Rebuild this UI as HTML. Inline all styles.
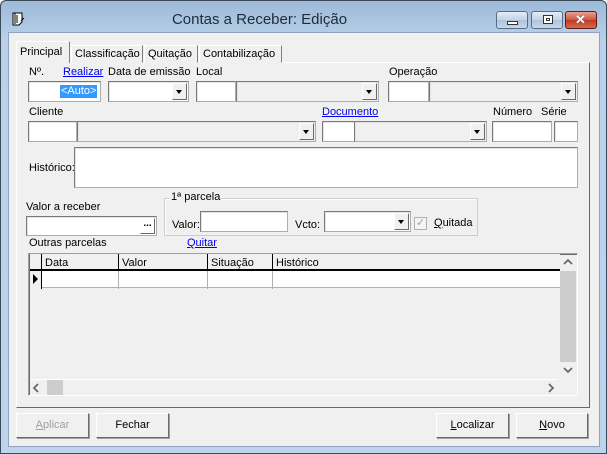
<!DOCTYPE html>
<html><head><meta charset="utf-8"><style>
*{box-sizing:border-box;margin:0;padding:0}
body{width:607px;height:454px;overflow:hidden;font-family:"Liberation Sans",sans-serif;font-size:11px;color:#000;background:#fff}
.a{position:absolute}
#win{position:absolute;left:0;top:0;width:607px;height:454px;background:linear-gradient(#9cb9d8,#b9d1ea 40px,#bcd4ec);box-shadow:inset 0 0 0 1px #3c4a5a;border-radius:6px 6px 0 0}
#client{position:absolute;left:8px;top:32px;width:592px;height:415px;background:#f0f0f0;border:1px solid #8ea4bd}
.t{position:absolute;white-space:nowrap;line-height:13px}
.ed{position:absolute;background:#fff;border:1px solid #abadb3;border-top-color:#7a7a7a;border-left-color:#7a7a7a;box-shadow:inset 1px 1px 0 #e3e3e3}
.g{background:#f0f0f0}
.dd{position:absolute;width:15px;top:1px;bottom:1px;right:1px;background:#f0f0f0;border:1px solid;border-color:#fff #696969 #696969 #fff}
.dd:after{content:"";position:absolute;left:3px;top:6px;border:3.5px solid transparent;border-top:4px solid #000}
.lnk{color:#0000ee;text-decoration:underline}
.btn{position:absolute;height:25px;background:#f0f0f0;border:1px solid;border-color:#fff #696969 #696969 #fff;box-shadow:1px 1px 0 #a0a0a0;text-align:center;line-height:23px;font-size:11px}
.tab{position:absolute;height:18px;border:1px solid;border-color:#fff #808080 transparent #fff;background:#f0f0f0;line-height:16px;padding-left:3px}
.wb{position:absolute;top:11px;height:18px;border:1px solid #5a6d84;border-radius:3px;background:linear-gradient(#e4ecf6,#c2d3e8 50%,#aec3dc 51%,#c7d8ec)}
.sa{position:absolute;width:0;height:0;border:4px solid transparent}
</style></head><body>
<div id="win">
<svg class="a" style="left:11px;top:11px" width="16" height="16" viewBox="0 0 16 16"><path d="M2 2h9v9l-3 3H2z" fill="#fff" stroke="#000"/><path d="M4 2v11M6 4v8M10 10l3-3" stroke="#000"/></svg>
<div class="t" style="left:153px;top:11px;width:213px;text-align:center;font-size:15px;line-height:18px;color:#1e2b3a">Contas a Receber: Edição</div>
<div class="wb" style="left:496px;width:32px"><div class="a" style="left:10px;top:9px;width:11px;height:4px;background:#fff;border:1px solid #333"></div></div>
<div class="wb" style="left:531px;width:32px"><div class="a" style="left:11px;top:3px;width:10px;height:9px;border:1px solid #333;background:#fff;box-shadow:inset 0 0 0 2px #fff,inset 0 0 0 3px #333"></div></div>
<div class="wb" style="left:565px;width:32px;border-color:#5c1c14;background:linear-gradient(#e8a193,#d0543c 50%,#c03a22 51%,#d56a50)"><div class="t" style="left:9px;top:1px;color:#fff;font-weight:bold;font-size:13px;text-shadow:0 0 1px #333">✕</div></div>
<div id="client">
 <div class="a" style="left:7px;top:29px;width:574px;height:346px;border:1px solid;border-color:#fff #696969 #696969 #fff"></div>
 <div class="tab" style="left:7px;top:8px;height:22px;width:54px;padding-top:2px;z-index:2;border-bottom:none">Principal</div>
 <div class="tab" style="left:62px;top:12px;width:72px">Classificação</div>
 <div class="tab" style="left:135px;top:12px;width:54px">Quitação</div>
 <div class="tab" style="left:190px;top:12px;width:83px">Contabilização</div>
</div>
<div class="t" style="left:29px;top:66px">Nº.</div>
<div class="t lnk" style="left:63px;top:66px">Realizar</div>
<div class="t" style="left:108px;top:66px">Data de emissão</div>
<div class="t" style="left:196px;top:66px">Local</div>
<div class="t" style="left:389px;top:66px">Operação</div>
<div class="ed" style="left:28px;top:81px;width:73px;height:21px"><span class="a" style="left:31px;top:3px;background:#3399ff;color:#fff;padding:0 1px;line-height:13px">&lt;Auto&gt;</span></div>
<div class="ed" style="left:108px;top:81px;width:81px;height:21px"><div class="dd"></div></div>
<div class="ed" style="left:196px;top:81px;width:40px;height:21px"></div>
<div class="ed g" style="left:236px;top:81px;width:143px;height:21px"><div class="dd"></div></div>
<div class="ed" style="left:388px;top:81px;width:41px;height:21px"></div>
<div class="ed g" style="left:429px;top:81px;width:149px;height:21px"><div class="dd"></div></div>
<div class="t" style="left:29px;top:106px">Cliente</div>
<div class="t lnk" style="left:322px;top:106px">Documento</div>
<div class="t" style="left:493px;top:106px">Número</div>
<div class="t" style="left:541px;top:106px">Série</div>
<div class="ed" style="left:28px;top:121px;width:49px;height:21px"></div>
<div class="ed g" style="left:77px;top:121px;width:239px;height:21px"><div class="dd"></div></div>
<div class="ed" style="left:322px;top:121px;width:33px;height:21px"></div>
<div class="ed g" style="left:354px;top:121px;width:133px;height:21px"><div class="dd"></div></div>
<div class="ed" style="left:492px;top:121px;width:60px;height:21px"></div>
<div class="ed" style="left:554px;top:121px;width:24px;height:21px"></div>
<div class="t" style="left:29px;top:162px">Histórico:</div>
<div class="ed" style="left:74px;top:147px;width:504px;height:41px"></div>
<div class="t" style="left:26px;top:201px">Valor a receber</div>
<div class="ed" style="left:26px;top:216px;width:131px;height:20px"><div class="a" style="right:1px;top:1px;width:15px;height:16px;border:1px solid;border-color:#fff #696969 #696969 #fff;font-size:10px;font-weight:bold;text-align:center;line-height:10px">...</div></div>
<div class="a" style="left:164px;top:198px;width:314px;height:38px;border:1px solid #c8ced4;box-shadow:inset 1px 1px 0 #fff"></div>
<div class="t" style="left:170px;top:191px;background:#f0f0f0;padding:0 1px">1ª parcela</div>
<div class="t" style="left:172px;top:219px">Valor:</div>
<div class="ed" style="left:200px;top:211px;width:88px;height:21px"></div>
<div class="t" style="left:295px;top:219px">Vcto:</div>
<div class="ed" style="left:324px;top:211px;width:87px;height:21px"><div class="dd"></div></div>
<div class="a" style="left:414px;top:217px;width:13px;height:13px;border:1px solid #b0b0b0;background:#f4f4f4;color:#a0a0a0;font-size:11px;line-height:11px;text-align:center">✓</div>
<div class="t" style="left:434px;top:217px"><u>Q</u>uitada</div>
<div class="t" style="left:29px;top:237px">Outras parcelas</div>
<div class="t lnk" style="left:187px;top:237px">Quitar</div>
<div class="a" style="left:28px;top:253px;width:550px;height:143px;border:1px solid;border-color:#a0a0a0 #fff #fff #a0a0a0;background:#f0f0f0;box-shadow:inset 1px 1px 0 #696969"></div>
<div class="a" style="left:30px;top:254px;width:530px;height:17px;background:#f0f0f0;border-bottom:2px solid #000"></div>
<div class="a" style="left:42px;top:271px;width:518px;height:17px;background:#fff;border-bottom:1px solid #b0b0b0"></div>
<div class="a" style="left:41px;top:254px;width:1px;height:35px;background:#000"></div>
<div class="a" style="left:118px;top:254px;width:1px;height:35px;background:#b0b0b0"></div>
<div class="a" style="left:207px;top:254px;width:1px;height:35px;background:#b0b0b0"></div>
<div class="a" style="left:272px;top:254px;width:1px;height:35px;background:#b0b0b0"></div>
<div class="a" style="left:118px;top:254px;width:1px;height:17px;background:#000"></div>
<div class="a" style="left:207px;top:254px;width:1px;height:17px;background:#000"></div>
<div class="a" style="left:272px;top:254px;width:1px;height:17px;background:#000"></div>
<div class="t" style="left:45px;top:257px">Data</div>
<div class="t" style="left:122px;top:257px">Valor</div>
<div class="t" style="left:211px;top:257px">Situação</div>
<div class="t" style="left:276px;top:257px">Histórico</div>
<div class="a" style="left:33px;top:274px;border:5px solid transparent;border-left:5px solid #000;border-right:0;height:0"></div>
<div class="a" style="left:560px;top:271px;width:16px;height:91px;background:#cdcdcd"></div>
<svg class="a" style="left:560px;top:256px" width="16" height="12"><path d="M4 8l4-4 4 4" fill="none" stroke="#606060" stroke-width="1.6"/></svg>
<svg class="a" style="left:560px;top:364px" width="16" height="12"><path d="M4 4l4 4 4-4" fill="none" stroke="#606060" stroke-width="1.6"/></svg>
<div class="a" style="left:30px;top:379px;width:528px;height:1px;background:#fff"></div>
<div class="a" style="left:47px;top:380px;width:16px;height:15px;background:#cdcdcd"></div>
<svg class="a" style="left:30px;top:381px" width="12" height="14"><path d="M8 3l-4 4 4 4" fill="none" stroke="#606060" stroke-width="1.6"/></svg>
<svg class="a" style="left:545px;top:381px" width="12" height="14"><path d="M4 3l4 4-4 4" fill="none" stroke="#606060" stroke-width="1.6"/></svg>
<div class="btn" style="left:16px;top:413px;width:73px;color:#a0a0a0"><u>A</u>plicar</div>
<div class="btn" style="left:96px;top:413px;width:73px">Fechar</div>
<div class="btn" style="left:436px;top:413px;width:73px"><u>L</u>ocalizar</div>
<div class="btn" style="left:516px;top:413px;width:72px"><u>N</u>ovo</div>
</div>
</body></html>
